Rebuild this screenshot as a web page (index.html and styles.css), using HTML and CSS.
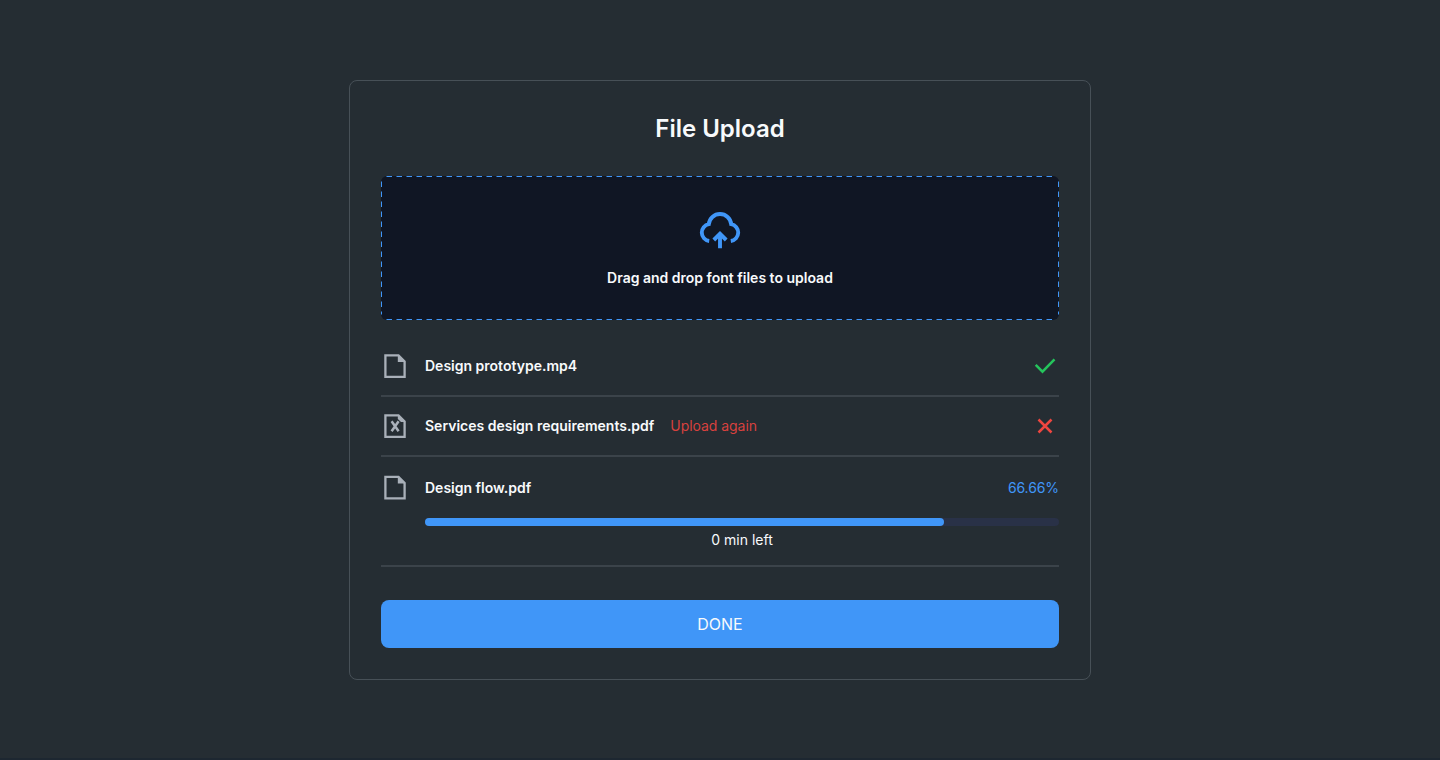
FILE: index.html
```html
<!DOCTYPE html>
<html lang="en">
<head>
<meta charset="utf-8">
<title>File Upload</title>
<link rel="stylesheet" href="styles.css">
</head>
<body>
<main class="page">
  <section class="card">
    <h1 class="title">File Upload</h1>
    <div class="dropzone">
      <svg class="dropzone-outline" viewBox="0 0 678 144" fill="none" stroke="#4096f8" stroke-dasharray="5.500 4.500"><path d="M5.500 0.500H672.500M677.500 5.500V138.500M5.500 143.500H672.500M0.500 5.500V138.500"/></svg>
      <svg class="cloud" viewBox="0 0 48 48" fill="none" stroke="#4096f8" stroke-width="3.900">
        <path d="M13.200 34A8.500 8.500 0 0 1 12.800 17.200A11.250 11.250 0 0 1 35.200 17.200A8.500 8.500 0 0 1 34.800 34"/>
        <path d="M24 41.300V27M17.800 33L24 26.800L30.200 33"/>
      </svg>
      <p class="dropzone-text">Drag and drop font files to upload</p>
    </div>
    <ul class="files">
      <li class="file">
        <svg class="file-icon" viewBox="0 0 28 28"><path d="M4.400 3.400H17.500L23.600 9.500V24.900H4.400Z" fill="none" stroke="#a9b0b9" stroke-width="2.300"/><path d="M16.800 3V10H24Z" fill="#a9b0b9"/></svg>
        <span class="file-name">Design prototype.mp4</span>
        <svg class="status" viewBox="0 0 28 28" fill="none" stroke="#25c45c" stroke-width="2.500"><path d="M4.700 12.900L11.500 19.700L23.500 7.400"/></svg>
      </li>
      <li class="file">
        <svg class="file-icon" viewBox="0 0 28 28"><path d="M4.400 3.400H17.500L23.600 9.500V24.900H4.400Z" fill="none" stroke="#a9b0b9" stroke-width="2.300"/><path d="M16.800 3V7L20 10H24Z" fill="#a9b0b9"/><path d="M10.600 9.200L17.600 19.200M17.600 9.200L10.600 19.200" stroke="#a9b0b9" stroke-width="2.500"/></svg>
        <span class="file-name">Services design requirements.pdf</span>
        <a class="retry">Upload again</a>
        <svg class="status" viewBox="0 0 28 28" fill="none" stroke="#ee4640" stroke-width="2.500"><path d="M7.500 7.500L20.500 20.500M20.500 7.500L7.500 20.500"/></svg>
      </li>
      <li class="file file-uploading">
        <svg class="file-icon" viewBox="0 0 28 28"><path d="M4.400 2.900H17.500L23.600 9V24.400H4.400Z" fill="none" stroke="#a9b0b9" stroke-width="2.300"/><path d="M16.800 2.500V9.500H24Z" fill="#a9b0b9"/></svg>
        <span class="file-name">Design flow.pdf</span>
        <span class="percent">66.66%</span>
        <div class="progress">
          <div class="track"><div class="fill" style="width: 81.9%"></div></div>
          <span class="remaining">0 min left</span>
        </div>
      </li>
    </ul>
    <button class="done">DONE</button>
  </section>
</main>
</body>
</html>
```
FILE: styles.css
```css
* { box-sizing: border-box; }
body {
  margin: 0;
  background: #252d33;
  color: #f8fafc;
  font-family: Inter, "Liberation Sans", sans-serif;
}
.page {
  display: flex;
  justify-content: center;
  align-items: center;
  height: 760px;
  padding-top: 2px;
  border-bottom: 2px solid #1d2731;
}
.card {
  display: flex;
  flex-direction: column;
  width: 742px;
  height: 600px;
  padding: 31px;
  border: 1px solid #475057;
  border-radius: 8px;
}
.title {
  margin: 0 0 30px;
  font-size: 24px;
  line-height: 34px;
  font-weight: 600;
  text-align: center;
}
.dropzone {
  position: relative;
  display: flex;
  flex-direction: column;
  align-items: center;
  height: 144px;
  padding-top: 31px;
  background: #101624;
  border-radius: 6px;
}
.dropzone-outline {
  position: absolute;
  top: 0;
  left: 0;
  width: 678px;
  height: 144px;
}
.cloud { width: 48px; height: 48px; }
.dropzone-text {
  margin: 13px 0 0;
  font-size: 14px;
  line-height: 20px;
  font-weight: 600;
}
.files {
  margin: 16px 0 0;
  padding: 0;
  list-style: none;
}
.file {
  display: flex;
  align-items: center;
  height: 61px;
  padding-top: 1px;
  border-bottom: 2px solid #3b434a;
  font-size: 14px;
  line-height: 20px;
}
.file + .file { height: 60px; padding-top: 0; }
.file-icon { width: 28px; height: 28px; }
.file-name { margin-left: 16px; font-weight: 600; }
.retry { margin-left: 16px; color: #d8413e; letter-spacing: -0.05px; }
.status { width: 28px; height: 28px; margin-left: auto; }
.file + .file-uploading {
  flex-wrap: wrap;
  align-content: flex-start;
  height: 110px;
  padding-top: 17px;
}
.percent {
  margin-left: auto;
  color: #4096f8;
  letter-spacing: -0.1px;
}
.progress {
  display: flex;
  flex-direction: column;
  align-items: center;
  width: 100%;
  padding: 16px 0 0 44px;
}
.track {
  width: 100%;
  height: 8px;
  border-radius: 4px;
  background: #293147;
}
.fill {
  height: 8px;
  border-radius: 4px;
  background: #4096f8;
}
.remaining { margin-top: 4px; }
.done {
  height: 48px;
  margin-top: 33px;
  border: 0;
  border-radius: 8px;
  background: #4096f8;
  color: #f8fafc;
  font: 16px/24px Inter, "Liberation Sans", sans-serif;
}
```
